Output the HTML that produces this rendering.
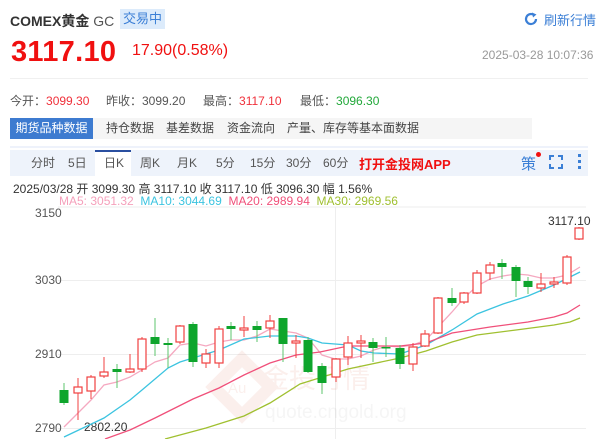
<!DOCTYPE html>
<html><head><meta charset="utf-8"><style>
body{margin:0;width:600px;height:439px;overflow:hidden;background:#fff;font-family:"Liberation Sans","Noto Sans CJK SC",sans-serif;position:relative;color:#333}
.a{position:absolute;white-space:nowrap}
</style></head><body>
<div class="a" style="left:10px;top:11px;font-size:14px;font-weight:bold;color:#333">COMEX黄金 <span style="font-weight:normal;color:#555">GC</span></div>
<div class="a" style="left:120px;top:9px;width:45px;height:20px;background:#dcebfb;color:#3b7fd6;font-size:13px;line-height:20px;text-align:center">交易中</div>
<svg class="a" style="left:524px;top:12px" width="14" height="14" viewBox="0 0 14 14"><path d="M12 7A5 5 0 1 1 9.5 2.7" fill="none" stroke="#3b7fd6" stroke-width="2.2"/><path d="M8 0.5L12.5 2.5L9 5.5Z" fill="#3b7fd6"/></svg>
<div class="a" style="left:544px;top:10px;font-size:13px;color:#3b7fd6">刷新行情</div>
<div class="a" style="left:11px;top:36px;font-size:29px;font-weight:bold;color:#f01010;letter-spacing:0.3px">3117.10</div>
<div class="a" style="left:132px;top:42px;font-size:16px;color:#f01010">17.90(0.58%)</div>
<div class="a" style="left:482px;top:48px;font-size:12px;color:#999">2025-03-28 10:07:36</div>
<div class="a" style="left:10px;top:78px;width:578px;height:1px;background:#f0f0f0"></div>
<div class="a" style="left:10px;top:92px;font-size:12px;color:#555">今开：<span style="color:#f0303a">3099.30</span></div>
<div class="a" style="left:106px;top:92px;font-size:12px;color:#555">昨收：3099.20</div>
<div class="a" style="left:203px;top:92px;font-size:12px;color:#555">最高：<span style="color:#f0303a">3117.10</span></div>
<div class="a" style="left:300px;top:92px;font-size:12px;color:#555">最低：<span style="color:#22a83a">3096.30</span></div>
<div class="a" style="left:10px;top:118px;width:522px;height:21px;background:#f5f5f5"></div>
<div class="a" style="left:10px;top:118px;width:83px;height:21px;background:#3d7bd0;color:#fff;font-size:12px;line-height:21px;text-align:center">期货品种数据</div>
<div class="a" style="left:106px;top:118px;font-size:12px;line-height:21px;color:#444">持仓数据</div>
<div class="a" style="left:166px;top:118px;font-size:12px;line-height:21px;color:#444">基差数据</div>
<div class="a" style="left:227px;top:118px;font-size:12px;line-height:21px;color:#444">资金流向</div>
<div class="a" style="left:287px;top:118px;font-size:12px;line-height:21px;color:#444">产量、库存等基本面数据</div>
<div class="a" style="left:10px;top:146px;width:578px;height:2px;background:#eef2fb"></div>
<div class="a" style="left:10px;top:150px;width:578px;height:26px;background:#eef3fb"></div>
<div class="a" style="left:95px;top:150px;width:36px;height:26px;background:#fff;border-top:2px solid #2a4fa0;box-sizing:border-box"></div>
<div class="a" style="left:0;top:155px;font-size:12px;color:#555;line-height:16px">
<span class="a" style="left:31px">分时</span><span class="a" style="left:68px">5日</span><span class="a" style="left:104px">日K</span><span class="a" style="left:140px">周K</span><span class="a" style="left:177px">月K</span><span class="a" style="left:216px">5分</span><span class="a" style="left:250px">15分</span><span class="a" style="left:286px">30分</span><span class="a" style="left:323px">60分</span></div>
<div class="a" style="left:359px;top:154px;font-size:13px;font-weight:bold;color:#f01010">打开金投网APP</div>
<div class="a" style="left:521px;top:153px;font-size:15px;color:#3b7fd6">策</div>
<div class="a" style="left:536px;top:152px;width:5px;height:5px;border-radius:50%;background:#f01010"></div>
<svg class="a" style="left:549px;top:155px" width="14" height="14"><path d="M1 5V1H5M9 1H13V5M13 9V13H9M5 13H1V9" fill="none" stroke="#3b7fd6" stroke-width="2"/></svg>
<div class="a" style="left:578px;top:154px;width:3px;height:3px;background:#3b7fd6;box-shadow:0 6px 0 #3b7fd6,0 12px 0 #3b7fd6"></div>
<div class="a" style="left:13px;top:180px;font-size:12px;color:#333">2025/03/28 开 3099.30 高 3117.10 收 3117.10 低 3096.30 幅 1.56%</div>
<div class="a" style="left:59px;top:194px;font-size:12px"><span style="color:#f5a0bb">MA5: 3051.32</span>&nbsp; <span style="color:#3cc4e0">MA10: 3044.69</span>&nbsp; <span style="color:#f0507a">MA20: 2989.94</span>&nbsp; <span style="color:#a0c030">MA30: 2969.56</span></div>
<svg class="a" style="left:0;top:0" width="600" height="439">
<g stroke="#eeeeee" stroke-width="1"><line x1="58" y1="207" x2="586" y2="207"/><line x1="58" y1="280.5" x2="586" y2="280.5"/><line x1="58" y1="354.5" x2="586" y2="354.5"/><line x1="58" y1="428.5" x2="586" y2="428.5"/><line x1="335.5" y1="207" x2="335.5" y2="439"/></g>
<g font-size="12" fill="#555" font-family="Liberation Sans"><text x="35" y="217">3150</text><text x="35" y="284">3030</text><text x="35" y="358">2910</text><text x="35" y="432">2790</text><text x="84" y="431" fill="#333">2802.20</text><text x="548" y="225" fill="#333">3117.10</text></g>
<g opacity="0.08"><rect x="222" y="367" width="40" height="40" transform="rotate(45 242 387)" fill="none" stroke="#d04020" stroke-width="12"/><text x="228" y="393" font-size="15" fill="#d04020">Au</text><text x="262" y="388" font-size="27" fill="#d04020" font-family="Noto Sans CJK SC">金投行情</text><text x="265" y="418" font-size="19" fill="#888">quote.cngold.org</text></g>
<g fill="none" stroke-width="1.3">
<polyline stroke="#f5a8c0" points="64,427 78,413 91,400 104,385 117,382 130,377 142,370 155,362 168,358 180,345 193,343 206,346 219,342 231,340 244,340 257,336 270,329 283,331 296,333 308,338 322,355 335,359 348,359 361,356 374,350 387,346 400,347 413,345 426,340 438,327 452,312 464,298 477,286 490,279 503,276 516,274 528,275 541,278 554,278 567,275 580,267"/>
<polyline stroke="#3cc4e0" points="64,437 104,418 130,400 142,390 168,368 180,362 193,358 219,350 244,339 270,336 296,336 308,338 322,343 348,345 361,351 374,353 400,354 426,345 452,330 477,314 503,304 528,296 554,285 580,272"/>
<polyline stroke="#f0507a" points="105,439 130,430 155,418 193,399 219,388 244,375 270,363 296,355 320,352 348,346 400,346 426,343 452,333 490,327 528,322 554,317 567,313 580,305"/>
<polyline stroke="#a0c030" points="165,439 206,428 244,416 270,403 300,384 348,369 400,358 426,351 452,342 477,335 516,330 554,325 570,322 580,318"/>
</g>
<g id="c"></g>
</svg>
<script>
var d=[[64,390,403,383,405,0],[78,387,393,378,420,1],[91,377,391,375,399,1],[104,372,376,357,378,1],[117,369,372,364,388,0],[130,369,372,354,373,1],[142,339,369,337,372,1],[155,337,344,318,356,0],[168,343,345,338,368,0],[180,326,342,325,344,1],[193,324,362,322,367,0],[206,354,363,349,368,1],[219,329,363,326,368,1],[231,326,329,322,340,0],[244,328,330,316,337,1],[257,326,330,321,342,0],[270,321,328,315,338,1],[283,318,344,318,362,0],[296,341,343,335,358,1],[308,340,372,337,373,0],[322,366,383,363,394,0],[336,359,377,358,382,1],[348,343,357,336,365,1],[361,341,343,335,358,1],[373,342,348,338,362,0],[386,347,348,337,357,0],[400,348,364,345,369,0],[413,347,364,343,371,1],[425,334,346,330,347,1],[438,298,333,297,334,1],[452,298,303,288,306,0],[464,293,302,292,304,1],[477,273,293,270,294,1],[490,265,273,262,280,1],[502,263,267,259,279,0],[516,267,281,265,297,0],[528,281,287,277,294,0],[541,284,288,273,292,1],[554,282,284,277,288,1],[567,257,283,255,285,1],[579,228,239,227,240,1]];
var s='';d.forEach(function(c){var col=c[5]?'#f04040':'#1aa33a';s+='<line x1="'+c[0]+'" x2="'+c[0]+'" y1="'+c[3]+'" y2="'+c[4]+'" stroke="'+(c[5]?col:'#5cc46c')+'" stroke-width="1"/>';var h=Math.max(c[2]-c[1],1.5);s+=c[5]?'<rect x="'+(c[0]-4)+'" y="'+c[1]+'" width="8" height="'+h+'" fill="#fff" stroke="'+col+'" stroke-width="1.2"/>':'<rect x="'+(c[0]-4.5)+'" y="'+c[1]+'" width="9" height="'+h+'" fill="#0ea52c"/>';});
document.getElementById('c').innerHTML=s;
</script>
</body></html>
